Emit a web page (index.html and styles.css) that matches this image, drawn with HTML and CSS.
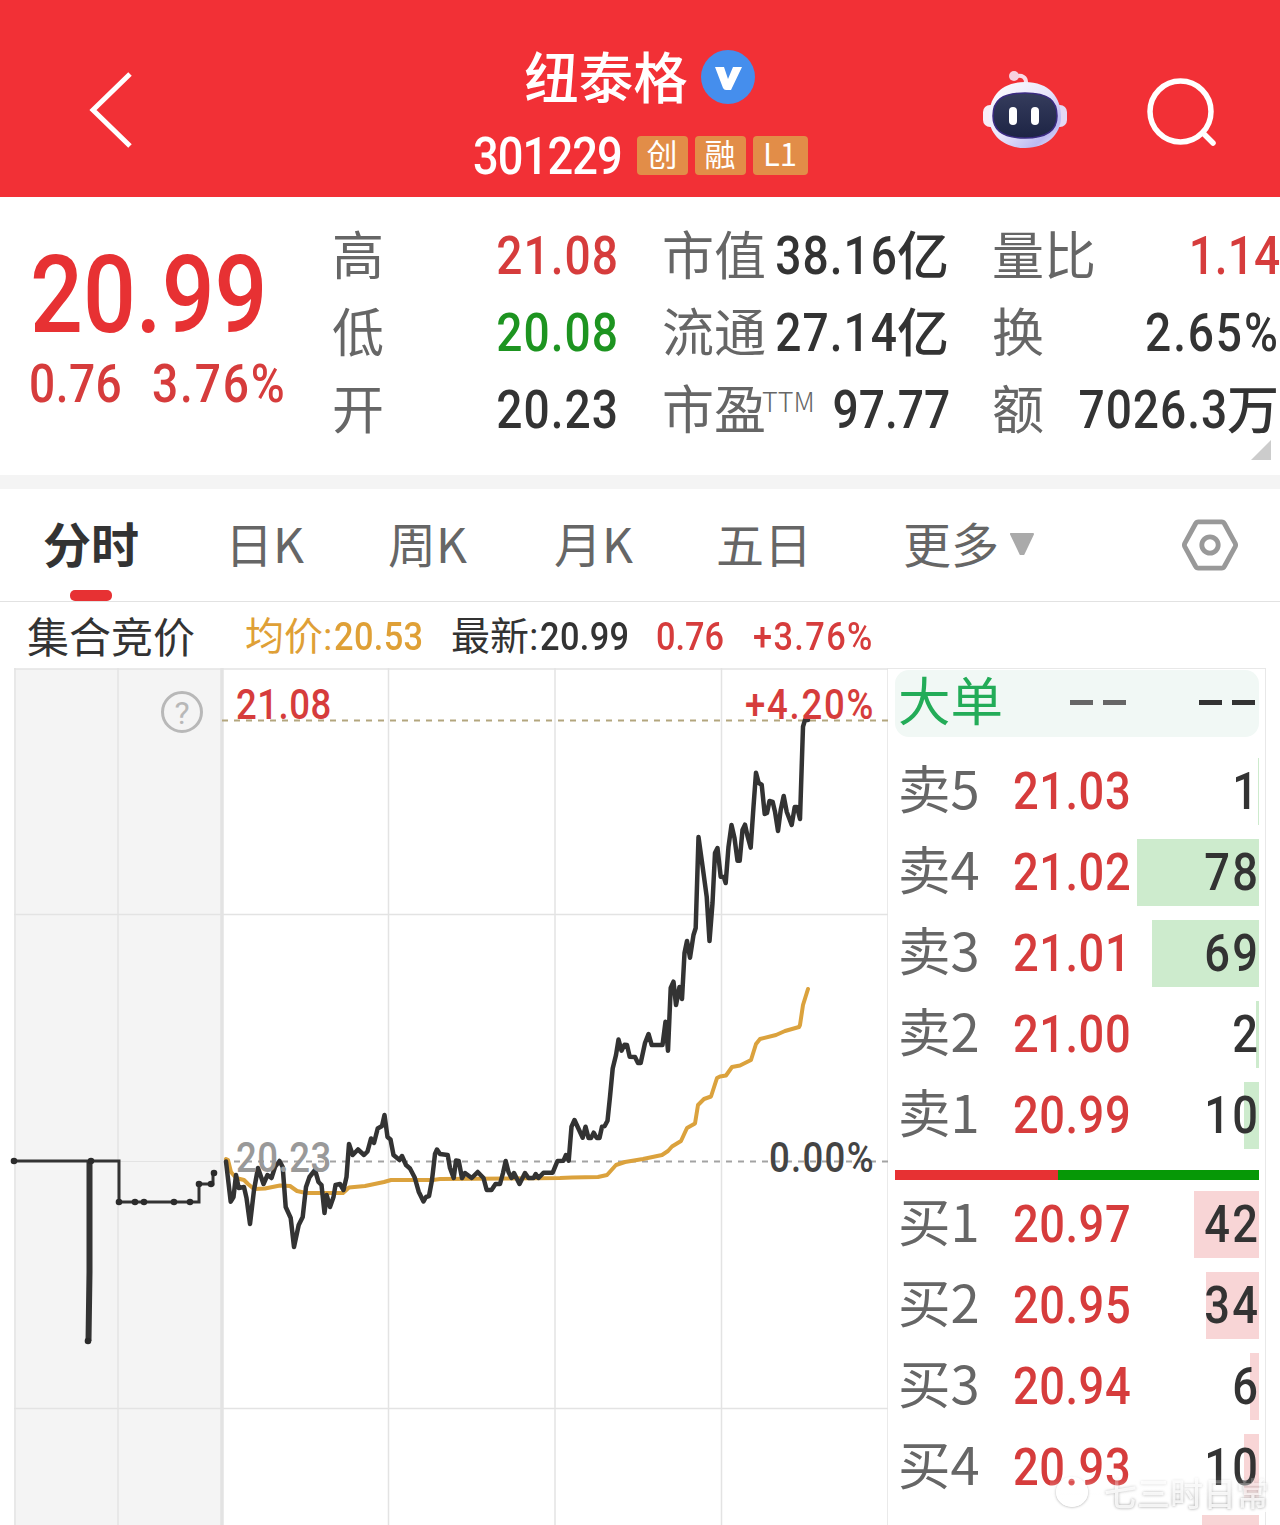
FILE: index.html
```html
<!DOCTYPE html>
<html lang="zh-CN">
<head>
    <meta charset="UTF-8">
    <meta name="viewport" content="width=device-width, initial-scale=1.0">
    <title>纽泰格 301229</title>
    <link rel="stylesheet" href="styles.css">
</head>
<body>
    <header class="header">
        <svg class="back" width="44" height="78" viewBox="0 0 44 78"><path d="M41 3 4 39l37 36" fill="none" stroke="#fff" stroke-width="5"/></svg>
        <div class="stock">
            <div class="stock-name">
                <h1>纽泰格</h1>
                <svg width="56" height="56" viewBox="0 0 56 56"><circle cx="28" cy="28" r="27" fill="#458eed"/><path d="M15 18h9l4 12 5-12h9L31 41h-5q-2 0-3-2z" fill="#fff"/></svg>
            </div>
            <div class="stock-code">
                <span class="num">301229</span>
                <span class="badge">创</span>
                <span class="badge">融</span>
                <span class="badge badge-l1">L1</span>
            </div>
        </div>
        <div class="actions">
            <svg width="86" height="80" viewBox="0 0 86 80">
                <defs>
                    <linearGradient id="shell" x1="0" y1="0" x2="1" y2="1"><stop offset="0" stop-color="#fff"/><stop offset=".5" stop-color="#e8e5fb"/><stop offset=".8" stop-color="#bcb9f2"/><stop offset="1" stop-color="#f4eefa"/></linearGradient>
                    <linearGradient id="face" x1="0" y1="0" x2="0" y2="1"><stop offset="0" stop-color="#353c5c"/><stop offset="1" stop-color="#1d2445"/></linearGradient>
                </defs>
                <path d="M32 6c8-3 13 0 12 8" fill="none" stroke="#f9dbe6" stroke-width="4"/>
                <circle cx="32" cy="5" r="5" fill="#f7d0df"/>
                <rect x="1" y="34" width="16" height="22" rx="7" fill="#f8edf7"/>
                <rect x="69" y="34" width="16" height="22" rx="7" fill="#e4d9f4"/>
                <path d="M43 11c24 0 36 15 36 35 0 17-14 31-36 31S7 63 7 46c0-20 12-35 36-35z" fill="url(#shell)"/>
                <path d="M43 22c24 0 32 8 32 23 0 14-9 22-32 22s-32-8-32-22c0-15 8-23 32-23z" fill="url(#face)" stroke="#3b2b83" stroke-width="1.5"/>
                <rect x="27" y="36" width="8" height="18" rx="4" fill="#fff"/>
                <rect x="49" y="36" width="8" height="18" rx="4" fill="#fff"/>
            </svg>
            <svg width="72" height="72" viewBox="0 0 72 72"><g fill="none" stroke="#fff" stroke-width="5.5"><circle cx="33.500" cy="35.500" r="30.5"/><path d="M56 57 66 67" stroke-linecap="round"/></g></svg>
        </div>
    </header>

    <section class="quote">
        <div class="quote-main">
            <div class="price num">20.99</div>
            <div class="change"><span class="num">0.76</span><span class="num">3.76%</span></div>
        </div>
        <dl class="stats stats-1">
            <div><dt>高</dt><dd><span class="num up">21.08</span></dd></div>
            <div><dt>低</dt><dd><span class="num down">20.08</span></dd></div>
            <div><dt>开</dt><dd><span class="num">20.23</span></dd></div>
        </dl>
        <dl class="stats stats-2">
            <div><dt>市值</dt><dd><span class="num">38.16</span>亿</dd></div>
            <div><dt>流通</dt><dd><span class="num">27.14</span>亿</dd></div>
            <div><dt>市盈<sup>TTM</sup></dt><dd><span class="num tight">97.77</span></dd></div>
        </dl>
        <dl class="stats stats-3">
            <div><dt>量比</dt><dd><span class="num tight up">1.14</span></dd></div>
            <div><dt>换</dt><dd><span class="num pct">2.65%</span></dd></div>
            <div><dt>额</dt><dd><span class="num">7026.3</span>万</dd></div>
        </dl>
        <span class="expand"></span>
    </section>

    <nav class="tabs">
        <a class="active">分时</a>
        <a>日K</a>
        <a>周K</a>
        <a>月K</a>
        <a>五日</a>
        <a>更多<svg width="26" height="23" viewBox="0 0 26 23"><path d="M2 1h22L14.500 21h-3z" fill="#aaa" stroke="#aaa" stroke-width="2" stroke-linejoin="round"/></svg></a>
        <svg class="settings" width="56" height="54" viewBox="0 0 58 54"><g fill="none" stroke="#999" stroke-width="5" stroke-linejoin="round"><path d="M17 3h24q2 0 3 2l11 20q1 2 0 4L44 49q-1 2-3 2H17q-2 0-3-2L3 29q-1-2 0-4L14 5q1-2 3-2z"/><circle cx="29" cy="27" r="8.500"/></g></svg>
    </nav>

    <div class="summary">
        <span class="summary-title">集合竞价</span>
        <span class="avg">均价:<span class="num">20.53</span></span>
        <span>最新:<span class="num">20.99</span></span>
        <span class="num tight up">0.76</span>
        <span class="num pct up">+3.76%</span>
    </div>

    <main class="board">
        <svg class="chart" width="888" height="857" viewBox="0 668 888 857">
            <!-- call auction area -->
            <rect x="14" y="669" width="208" height="856" fill="#f4f4f4"/>
            <g stroke="#e3e3e3" stroke-width="1.500">
                <path d="M14 669H888M14 914.500H888M14 1408.500H888" />
                <path d="M15 668V1525M118 668V1525M388.500 668V1525M555 668V1525M721.500 668V1525M888 668V1525"/>
                <path d="M119 1161.500H222" stroke-width="1"/>
                <path d="M222 668V1525" stroke-width="3.500"/>
            </g>
            <path d="M222 720.500H888" stroke="#b3a67e" stroke-width="2" stroke-dasharray="6 6"/>
            <path d="M234 1161.500H888" stroke="#a3a3a3" stroke-width="1.800" stroke-dasharray="6 6"/>

            <g fill="none" stroke="#333" stroke-width="4">
                <path d="M14 1161H119V1202H199V1184H213V1173" stroke-width="3"/>
                <path d="M89.500 1161V1272L88.500 1341" stroke-width="6"/>
            </g>
            <g fill="#2b2b2b">
                <circle cx="14" cy="1161" r="3.300"/><circle cx="91" cy="1161" r="3.300"/><circle cx="88" cy="1341" r="3.300"/>
                <circle cx="119" cy="1202" r="3.300"/><circle cx="135" cy="1202" r="3.300"/><circle cx="144" cy="1202" r="3.300"/>
                <circle cx="174" cy="1202" r="3.300"/><circle cx="190" cy="1202" r="3.300"/><circle cx="199" cy="1184" r="3.300"/>
                <circle cx="211" cy="1184" r="3.300"/><circle cx="214" cy="1173" r="3.300"/>
            </g>

            <polyline class="line line-avg" points="226,1159 228,1160 231,1172 236,1178 244,1180 248,1184 254,1189 265,1188.5 280,1185.5 290,1186 297,1191 306,1193 325,1193 343,1193 349,1187.5 365,1186 384,1182 391,1180 433,1180 440,1179 560,1178 572,1177.5 598,1177 607,1175 616,1165 625,1162 643,1159 662,1155 668,1151 672,1146.5 681,1141 687,1128 695,1123.5 698,1105 704,1099 711,1096.5 717,1078 720,1076.5 726,1075.5 732,1067 740,1065.5 751,1060 756,1044 760,1039 776,1035 785,1031 799,1027 800,1025 803,1005 808,989"/>
            <polyline class="line line-price" points="226,1161.5 230.7,1201.7 233.5,1197 236,1175 238.7,1188 244,1187 246.5,1198 250,1224 254,1190 258,1168 263.5,1184 267.5,1175 271.5,1178 275,1167 279.5,1161 282.7,1167 285.7,1207 290.7,1218 294,1247 298.7,1225 302.7,1217 306,1187 309.5,1177 315,1170 318.5,1182 321.5,1185 324.5,1213 326.7,1195 330,1207 333.5,1197 335.5,1185 340,1184 343.5,1190 346.5,1177 349,1144 352.7,1155 358,1149.5 364,1155 367.5,1151.5 371,1138.5 374,1143 377.7,1128.5 382,1126 384.5,1115 387.5,1137 390.5,1139.5 393.5,1155 399.5,1160 402,1156 406,1165 410,1168.5 414.7,1177.5 418.7,1191.7 423.5,1201.5 426,1197 429,1196 432,1180 435,1154 437,1149.5 440,1154 447.7,1155 450,1168 453.7,1178 456,1160.5 458.7,1161 462,1178 465,1173 471.7,1178 477.7,1172 483.5,1178 486.7,1190 491.5,1190 495.5,1184 500,1184 503,1173 505.7,1161 508.5,1172 511.5,1178 514,1173 519.5,1184 525,1173 528.5,1178 533.5,1178 535.7,1174 538.5,1178 543.5,1172.7 552.7,1172.7 557.5,1161 563.5,1160.7 566,1155 568.7,1160.7 571.5,1126.7 574.5,1120 577.7,1127 582.7,1137.7 585.5,1126.7 588.5,1138 591,1138 593.7,1132.7 596.7,1138 599.5,1138 602,1126.7 604.7,1126 607.5,1120.7 610,1096.7 612.7,1068.5 616,1055 618.5,1039.5 621.5,1050.7 624.5,1044.7 627,1045 629.7,1056.7 635,1057 638,1063 640.7,1063 645,1043 648.5,1034 651.7,1045 662.5,1045 665.5,1021.7 668,1050.7 670.7,988 673.5,981.7 676,1005 679.5,987 682,999 684.5,953 687,941 690,957.7 693.5,935 695.7,928 698.5,837 701.7,860 706.7,896.7 709.5,941 712.5,903 715,853 717.5,848 720.7,876.7 723.7,877 725.7,883 728.5,846.7 731.5,825 734.5,838 737.5,860.7 739.7,860.7 742.5,830 745,824.7 747.7,836.7 750.7,847.7 753.5,806.7 756,772.7 758.7,783 761.7,784.7 764.7,814 767,813 769.5,801 772.7,802 775,811.7 778,831 780.7,810 783.7,796 786.7,811.7 791.7,825 794.7,807 797,807 800,819 801.7,766.7 803,726.7 805,720 808,720"/>

            <g class="axis">
                <text transform="translate(236 719) scale(.87 1)" letter-spacing=".6" fill="#d63c3c">21.08</text>
                <text transform="translate(745 719) scale(.87 1)" letter-spacing="2" fill="#d63c3c">+4.20%</text>
                <text transform="translate(236 1172) scale(.87 1)" letter-spacing=".6" fill="#999">20.23</text>
                <text transform="translate(769 1172) scale(.87 1)" letter-spacing="1.5" fill="#444">0.00%</text>
            </g>
            <circle cx="182" cy="712" r="19.500" fill="none" stroke="#b8b8b8" stroke-width="3"/>
            <text class="help" x="182" y="724" text-anchor="middle">?</text>
        </svg>

        <div class="book">
            <div class="row big"><span>大单</span><i></i><i></i><i></i><i></i></div>
            <div class="row sell"><b style="width: 1px"></b><span>卖5</span><em class="num">21.03</em><strong class="num">1</strong></div>
            <div class="row sell"><b style="width: 122px"></b><span>卖4</span><em class="num">21.02</em><strong class="num">78</strong></div>
            <div class="row sell"><b style="width: 107px"></b><span>卖3</span><em class="num">21.01</em><strong class="num">69</strong></div>
            <div class="row sell"><b style="width: 3px"></b><span>卖2</span><em class="num">21.00</em><strong class="num">2</strong></div>
            <div class="row sell"><b style="width: 15px"></b><span>卖1</span><em class="num">20.99</em><strong class="num">10</strong></div>
            <div class="ratio"></div>
            <div class="row buy"><b style="width: 65px"></b><span>买1</span><em class="num">20.97</em><strong class="num">42</strong></div>
            <div class="row buy"><b style="width: 53px"></b><span>买2</span><em class="num">20.95</em><strong class="num">34</strong></div>
            <div class="row buy"><b style="width: 9px"></b><span>买3</span><em class="num">20.94</em><strong class="num">6</strong></div>
            <div class="row buy"><b style="width: 15px"></b><span>买4</span><em class="num">20.93</em><strong class="num">10</strong></div>
            <div class="row buy"><b style="width: 57px"></b><span>买5</span></div>
        </div>
    </main>
    <div class="watermark"><span></span>七三时日常</div>
</body>
</html>
```

FILE: styles.css
```css
* { box-sizing: border-box; }
body {
    margin: 0;
    width: 1280px;
    height: 1525px;
    overflow: hidden;
    position: relative;
    background: #fff;
    color: #333;
    font-family: Roboto, "Noto Sans CJK SC", sans-serif;
}
h1, dl, dd { margin: 0; }
svg { display: block; flex: none; }
/* narrow figures */
.num {
    display: inline-block;
    font-family: Roboto, "Noto Sans CJK SC", sans-serif;
    font-weight: 500;
    letter-spacing: 0.022em;
    transform: scaleX(0.87);
    transform-origin: left;
}
.num.tight { letter-spacing: 0; }
.num.pct { letter-spacing: 0.04em; }
.up { color: #d63c3c; }
.down { color: #1d9420; }

/* header */
.header {
    height: 197px;
    background: #f23036;
    color: #fff;
    display: grid;
    grid-template-columns: 340px 600px 340px;
}
.back { margin: 71px 0 0 89px; }
.stock { display: flex; flex-direction: column; align-items: center; padding-top: 43px; }
.stock-name { display: flex; align-items: center; gap: 12px; height: 67px; }
.stock-name h1 { font: 500 54.5px/64px "Noto Sans CJK SC", sans-serif; margin-top: -3px; }
.stock-code { display: flex; align-items: center; gap: 7px; height: 48px; margin-top: 21px; }
.stock-code .num { width: 150px; margin: 4px 7px 0 0; font-size: 52px; line-height: 48px; letter-spacing: -0.02em; }
.badge {
    width: 51px;
    height: 39px;
    border-radius: 4px;
    background: #e28d48;
    text-align: center;
    font: 400 31px/34px "Noto Sans CJK SC", sans-serif;
}
.badge-l1 { width: 55px; }
.actions { display: flex; padding: 71px 0 0 42px; gap: 79px; }
.actions svg + svg { margin-top: 5px; }

/* quote */
.quote { position: relative; display: flex; height: 292px; border-bottom: 14px solid #f4f4f4; }
.quote-main { width: 332px; padding: 45px 0 0 29px; color: #e73133; }
.price { display: block; margin-left: 1px; font-size: 107px; line-height: 108px; letter-spacing: 0; white-space: nowrap; }
.change { display: flex; font-size: 53px; line-height: 68px; color: #d63c3c; }
.change .num { width: 123px; letter-spacing: 0.01em; }
.change .num + .num { letter-spacing: 0.04em; }
.stats { padding-top: 20px; }
.stats div { display: flex; justify-content: space-between; height: 77px; white-space: nowrap; }
.stats dt { flex: none; font: 400 52px/72px "Noto Sans CJK SC", sans-serif; color: #666; }
.stats dd { display: flex; flex: 1; min-width: 0; justify-content: flex-end; font: 500 52px/72px "Noto Sans CJK SC", sans-serif; }
.stats .num { flex: none; margin-right: -1px; font-size: 53px; line-height: 78px; transform-origin: right; }
.stats sup { display: inline-block; width: 0; margin-left: -4px; font-size: 27px; line-height: 1; vertical-align: 17px; font-weight: 300; }
.stats-1 { width: 286px; margin-right: 44px; }
.stats-2 { width: 287px; margin-right: 43px; }
.stats-3 { width: 287px; }
.expand { position: absolute; right: 9px; bottom: 15px; border: solid transparent; border-width: 20px 0 0 20px; border-bottom: 20px solid #ccc; border-top: 0; }

/* tabs */
.tabs {
    display: grid;
    grid-template-columns: 182px 163px 166px 162px 187px 279px 58px;
    height: 113px;
    padding-left: 43px;
    border-bottom: 1px solid #e2e2e2;
    font: 400 48px/106px "Noto Sans CJK SC", sans-serif;
    color: #666;
}
.tabs a { display: flex; height: 112px; }
.tabs a svg { margin: 44px 0 0 10px; }
.tabs .active { position: relative; color: #333; font-weight: 700; }
.tabs .active::after {
    content: "";
    position: absolute;
    left: 27px;
    bottom: 0;
    width: 42px;
    height: 11px;
    border-radius: 5px;
    background: #e73133;
}
.settings { margin-top: 29px; }

/* summary line */
.summary {
    display: grid;
    grid-template-columns: 218px 206px 205px 97px auto;
    height: 66px;
    padding-left: 27px;
    font: 400 39px/70px Roboto, "Noto Sans CJK SC", sans-serif;
    white-space: nowrap;
}
.summary .num { font-size: 39.5px; }
.summary span > .num { margin-left: 2px; letter-spacing: 0.01em; }
.summary-title { font: 400 42px/65px "Noto Sans CJK SC", sans-serif; }
.summary .avg { color: #dfa036; }

/* chart */
.board { display: flex; height: 857px; }
.line { fill: none; stroke-linejoin: round; stroke-linecap: round; }
.line-price { stroke: #333; stroke-width: 4.5; }
.line-avg { stroke: #dba23d; stroke-width: 4; }
.axis { font: 500 42px Roboto, sans-serif; }
.help { font: 400 32px Roboto, sans-serif; fill: #b8b8b8; }

/* order book */
.book {
    display: flex;
    flex-direction: column;
    gap: 14px;
    width: 378px;
    height: 857px;
    overflow: hidden;
    padding: 1px 6px 0 7px;
    border-top: 1px solid #e8e8e8;
    border-right: 1px solid #e8e8e8;
}
.row { position: relative; display: flex; flex: none; align-items: center; height: 67px; padding-left: 3px; line-height: 67px; white-space: nowrap; }
.row span { flex: none; width: 115px; margin-top: -10px; font: 400 52.5px/67px "Noto Sans CJK SC", sans-serif; color: #666; }
.row em { font-size: 52px; font-style: normal; color: #d63c3c; letter-spacing: 0.012em; }
.row strong { position: relative; margin-left: auto; margin-right: -1px; font-size: 52px; letter-spacing: 0.05em; transform-origin: right; }
.row b { position: absolute; right: 0; top: 0; height: 67px; }
.sell b { background: #cdebcd; }
.buy b { background: #f8d5d6; }
.big { margin-bottom: 7px; border-radius: 14px; background: #f1f8f5; }
.big span { width: 172px; color: #23ac58; }
.big i { flex: none; width: 23px; height: 5px; margin: -3px 10px 0 0; background: #666; }
.big i:nth-of-type(2) { margin-right: 73px; }
.big i:nth-of-type(n+3) { background: #333; }
.ratio { flex: none; height: 10px; margin: 7px 0 -3px; background: linear-gradient(90deg, #e73133 163px, #069806 163px); }

/* watermark */
.watermark {
    position: absolute;
    left: 1050px;
    top: 1472px;
    display: flex;
    align-items: center;
    gap: 16px;
    width: 222px;
    height: 40px;
    padding-left: 6px;
    background: linear-gradient(rgba(255, 255, 255, 0), rgba(255, 255, 255, 0.85) 75%);
    font: 500 33px/36px "Noto Sans CJK SC", sans-serif;
    white-space: nowrap;
    color: rgba(255, 255, 255, 0.85);
    text-shadow: 0 0 3px rgba(0, 0, 0, 0.4);
    -webkit-mask-image: linear-gradient(transparent, #000 70%);
    mask-image: linear-gradient(transparent, #000 70%);
}
.watermark span { width: 32px; height: 30px; border: 4px solid #fff; border-radius: 50%; box-shadow: 0 0 3px rgba(0, 0, 0, 0.4); }
```
